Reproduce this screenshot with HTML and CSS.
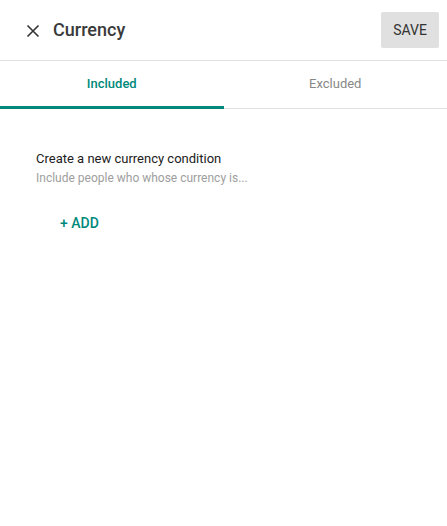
FILE: index.html
```html
<!DOCTYPE html>
<html>
<head>
<meta charset="utf-8">
<link rel="stylesheet" href="styles.css">
</head>
<body>
<div class="page">
  <header class="header">
    <button class="close" aria-label="Close">
      <svg width="14" height="14" viewBox="0 0 14 14"><path d="M1.5 1.5L12.5 12.5M12.5 1.5L1.5 12.5" stroke="#333" stroke-width="1.6" fill="none"/></svg>
    </button>
    <h1 class="title">Currency</h1>
    <button class="save">SAVE</button>
  </header>
  <nav class="tabs">
    <div class="tab active">Included</div>
    <div class="tab">Excluded</div>
  </nav>
  <section class="content">
    <div class="heading">Create a new currency condition</div>
    <div class="sub">Include people who whose currency is...</div>
    <button class="add">+ ADD</button>
  </section>
</div>
</body>
</html>
```
FILE: styles.css
```css
* { box-sizing: border-box; }
html, body { margin: 0; padding: 0; background: #fff; }
body { font-family: Roboto, "Liberation Sans", Arial, sans-serif; }
.page { width: 447px; }
.header {
  height: 61px;
  display: flex;
  align-items: center;
  border-bottom: 1px solid #e0e0e0;
  padding: 0 8px 0 24px;
}
.close {
  border: 0; background: none; padding: 0; margin: 0;
  width: 18px; height: 18px;
  display: flex; align-items: center; justify-content: center;
  margin-right: 11px;
  margin-top: 2px;
  cursor: pointer;
}
.title {
  margin: 0;
  font-size: 18px;
  font-weight: 500;
  color: #3a3a3a;
  flex: 1;
  margin-top: -1px;
}
.save {
  border: 0;
  background: #e0e0e0;
  border-radius: 2px;
  width: 58px; height: 36px;
  font-family: inherit;
  font-size: 14px;
  font-weight: 400;
  color: #333;
  padding: 0;
  margin-top: -1px;
}
.tabs {
  display: flex;
  height: 48px;
  border-bottom: 1px solid #e0e0e0;
}
.tab {
  flex: 1;
  display: flex; align-items: center; justify-content: center;
  font-size: 13px;
  color: #888;
  padding-bottom: 1px;
  border-bottom: 3px solid transparent;
  margin-bottom: -1px;
}
.tab.active {
  color: #00897b;
  font-weight: 500;
  border-bottom-color: #00897b;
}
.content { padding: 41px 36px 0; }
.heading { font-size: 13px; color: #212121; line-height: 18px; }
.sub { font-size: 12px; color: #9e9e9e; line-height: 16px; margin-top: 2px; }
.add {
  border: 0; background: none;
  font-family: inherit;
  font-size: 14px;
  font-weight: 500;
  color: #00897b;
  padding: 0;
  margin: 29px 0 0 24px;
  line-height: 16px;
}
```
